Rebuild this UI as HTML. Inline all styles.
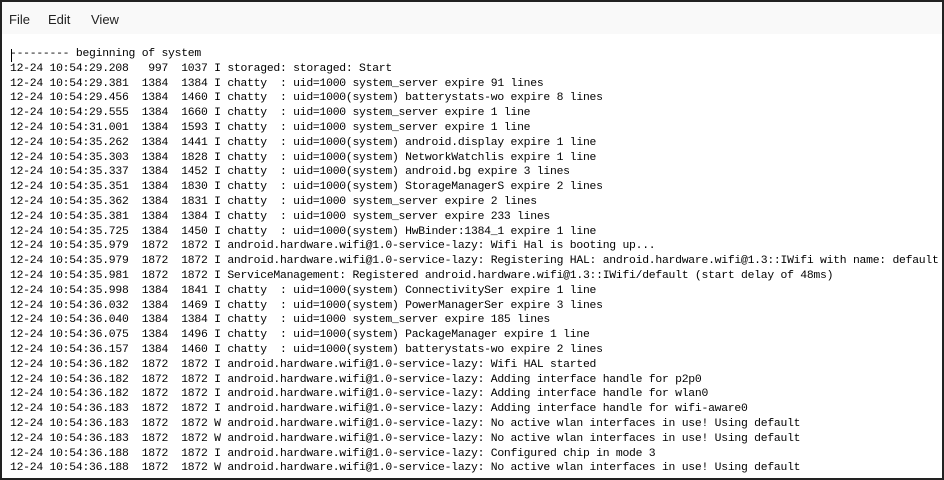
<!DOCTYPE html>
<html><head><meta charset="utf-8"><style>
html,body{margin:0;padding:0;width:944px;height:480px;overflow:hidden;background:#fff}
.frame{position:absolute;left:0;top:0;width:940px;height:476px;border:2px solid #222;background:#fff}
.menu{position:absolute;left:0;top:0;width:940px;height:32px;background:#f9f9f9;font-family:"Liberation Sans",sans-serif;font-size:13px;color:#222}
.menu span{position:absolute;top:10px}
pre{position:absolute;left:8px;top:45px;margin:0;font-family:"Liberation Mono",monospace;font-size:11.4px;letter-spacing:-0.25px;line-height:14.8px;color:#000;white-space:pre}
.cur{position:absolute;left:9px;top:47px;width:1px;height:13px;background:#000}
</style></head><body>
<div class="frame">
<div class="menu"><span style="left:7px">File</span><span style="left:46px">Edit</span><span style="left:89px">View</span></div>
<div class="cur"></div>
<pre>--------- beginning of system
12-24 10:54:29.208   997  1037 I storaged: storaged: Start
12-24 10:54:29.381  1384  1384 I chatty  : uid=1000 system_server expire 91 lines
12-24 10:54:29.456  1384  1460 I chatty  : uid=1000(system) batterystats-wo expire 8 lines
12-24 10:54:29.555  1384  1660 I chatty  : uid=1000 system_server expire 1 line
12-24 10:54:31.001  1384  1593 I chatty  : uid=1000 system_server expire 1 line
12-24 10:54:35.262  1384  1441 I chatty  : uid=1000(system) android.display expire 1 line
12-24 10:54:35.303  1384  1828 I chatty  : uid=1000(system) NetworkWatchlis expire 1 line
12-24 10:54:35.337  1384  1452 I chatty  : uid=1000(system) android.bg expire 3 lines
12-24 10:54:35.351  1384  1830 I chatty  : uid=1000(system) StorageManagerS expire 2 lines
12-24 10:54:35.362  1384  1831 I chatty  : uid=1000 system_server expire 2 lines
12-24 10:54:35.381  1384  1384 I chatty  : uid=1000 system_server expire 233 lines
12-24 10:54:35.725  1384  1450 I chatty  : uid=1000(system) HwBinder:1384_1 expire 1 line
12-24 10:54:35.979  1872  1872 I android.hardware.wifi@1.0-service-lazy: Wifi Hal is booting up...
12-24 10:54:35.979  1872  1872 I android.hardware.wifi@1.0-service-lazy: Registering HAL: android.hardware.wifi@1.3::IWifi with name: default
12-24 10:54:35.981  1872  1872 I ServiceManagement: Registered android.hardware.wifi@1.3::IWifi/default (start delay of 48ms)
12-24 10:54:35.998  1384  1841 I chatty  : uid=1000(system) ConnectivitySer expire 1 line
12-24 10:54:36.032  1384  1469 I chatty  : uid=1000(system) PowerManagerSer expire 3 lines
12-24 10:54:36.040  1384  1384 I chatty  : uid=1000 system_server expire 185 lines
12-24 10:54:36.075  1384  1496 I chatty  : uid=1000(system) PackageManager expire 1 line
12-24 10:54:36.157  1384  1460 I chatty  : uid=1000(system) batterystats-wo expire 2 lines
12-24 10:54:36.182  1872  1872 I android.hardware.wifi@1.0-service-lazy: Wifi HAL started
12-24 10:54:36.182  1872  1872 I android.hardware.wifi@1.0-service-lazy: Adding interface handle for p2p0
12-24 10:54:36.182  1872  1872 I android.hardware.wifi@1.0-service-lazy: Adding interface handle for wlan0
12-24 10:54:36.183  1872  1872 I android.hardware.wifi@1.0-service-lazy: Adding interface handle for wifi-aware0
12-24 10:54:36.183  1872  1872 W android.hardware.wifi@1.0-service-lazy: No active wlan interfaces in use! Using default
12-24 10:54:36.183  1872  1872 W android.hardware.wifi@1.0-service-lazy: No active wlan interfaces in use! Using default
12-24 10:54:36.188  1872  1872 I android.hardware.wifi@1.0-service-lazy: Configured chip in mode 3
12-24 10:54:36.188  1872  1872 W android.hardware.wifi@1.0-service-lazy: No active wlan interfaces in use! Using default</pre>
</div>
</body></html>
